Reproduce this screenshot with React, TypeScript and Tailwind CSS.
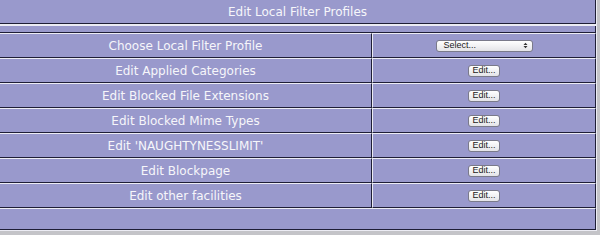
import {FC} from 'react';

const rows = [
  'Edit Applied Categories',
  'Edit Blocked File Extensions',
  'Edit Blocked Mime Types',
  "Edit 'NAUGHTYNESSLIMIT'",
  'Edit Blockpage',
  'Edit other facilities',
];

const cell = 'border-t border-l border-t-[#ececf4] border-l-[#ececf4] border-b border-r border-b-[#1e1e36] border-r-[#1e1e36] bg-[#9999cc]';

const EditButton: FC = () => (
  <button className="flex h-[12px] w-[32px] items-center justify-center rounded-[3px] border border-[#7a7a8a] bg-gradient-to-b from-white to-[#e4e4e8] font-['Liberation_Sans',sans-serif] text-[9px] leading-none text-[#1a1a1a]">
    Edit...
  </button>
);

const SelectBox: FC = () => (
  <div className="flex h-[12px] w-[97px] items-center justify-between rounded-[3px] border border-[#7a7a8a] bg-gradient-to-b from-white to-[#e4e4e8] pl-[7px] pr-[4px] font-['Liberation_Sans',sans-serif] text-[9px] leading-none text-[#1a1a1a]">
    <span>Select...</span>
    <svg width="5" height="7" viewBox="0 0 5 7" className="text-[#333]">
      <path d="M0.5 3 L2.5 0.8 L4.5 3 Z M0.5 4 L2.5 6.2 L4.5 4 Z" fill="currentColor" />
    </svg>
  </div>
);

const App: FC = () => (
  <div className="h-[235px] w-[600px] overflow-hidden bg-[#c4c4c8] font-['DejaVu_Sans',sans-serif] text-[12px] text-[#f6f6fa]">
    <div className="w-[597px] border-r border-b border-[#ececf4] bg-[#ececf4]">
      <div className="flex h-[24px] items-center justify-center border-b border-r border-[#1e1e36] bg-[#9999cc]">
        Edit Local Filter Profiles
      </div>
      <div className="mt-[2px] h-[7px] border-b border-r border-[#1e1e36] bg-[#9999cc]" />
      <div className="grid grid-cols-[372px_224px]">
        <div className={`${cell} flex h-[25px] items-center justify-center border-l-0`}>Choose Local Filter Profile</div>
        <div className={`${cell} flex h-[25px] items-center justify-center`}>
          <SelectBox />
        </div>
        {rows.map(label => (
          <div key={label} className="contents">
            <div className={`${cell} flex h-[25px] items-center justify-center border-l-0`}>{label}</div>
            <div className={`${cell} flex h-[25px] items-center justify-center`}>
              <EditButton />
            </div>
          </div>
        ))}
      </div>
      <div className={`${cell} h-[22px] border-l-0`} />
    </div>
  </div>
);

export default App;
